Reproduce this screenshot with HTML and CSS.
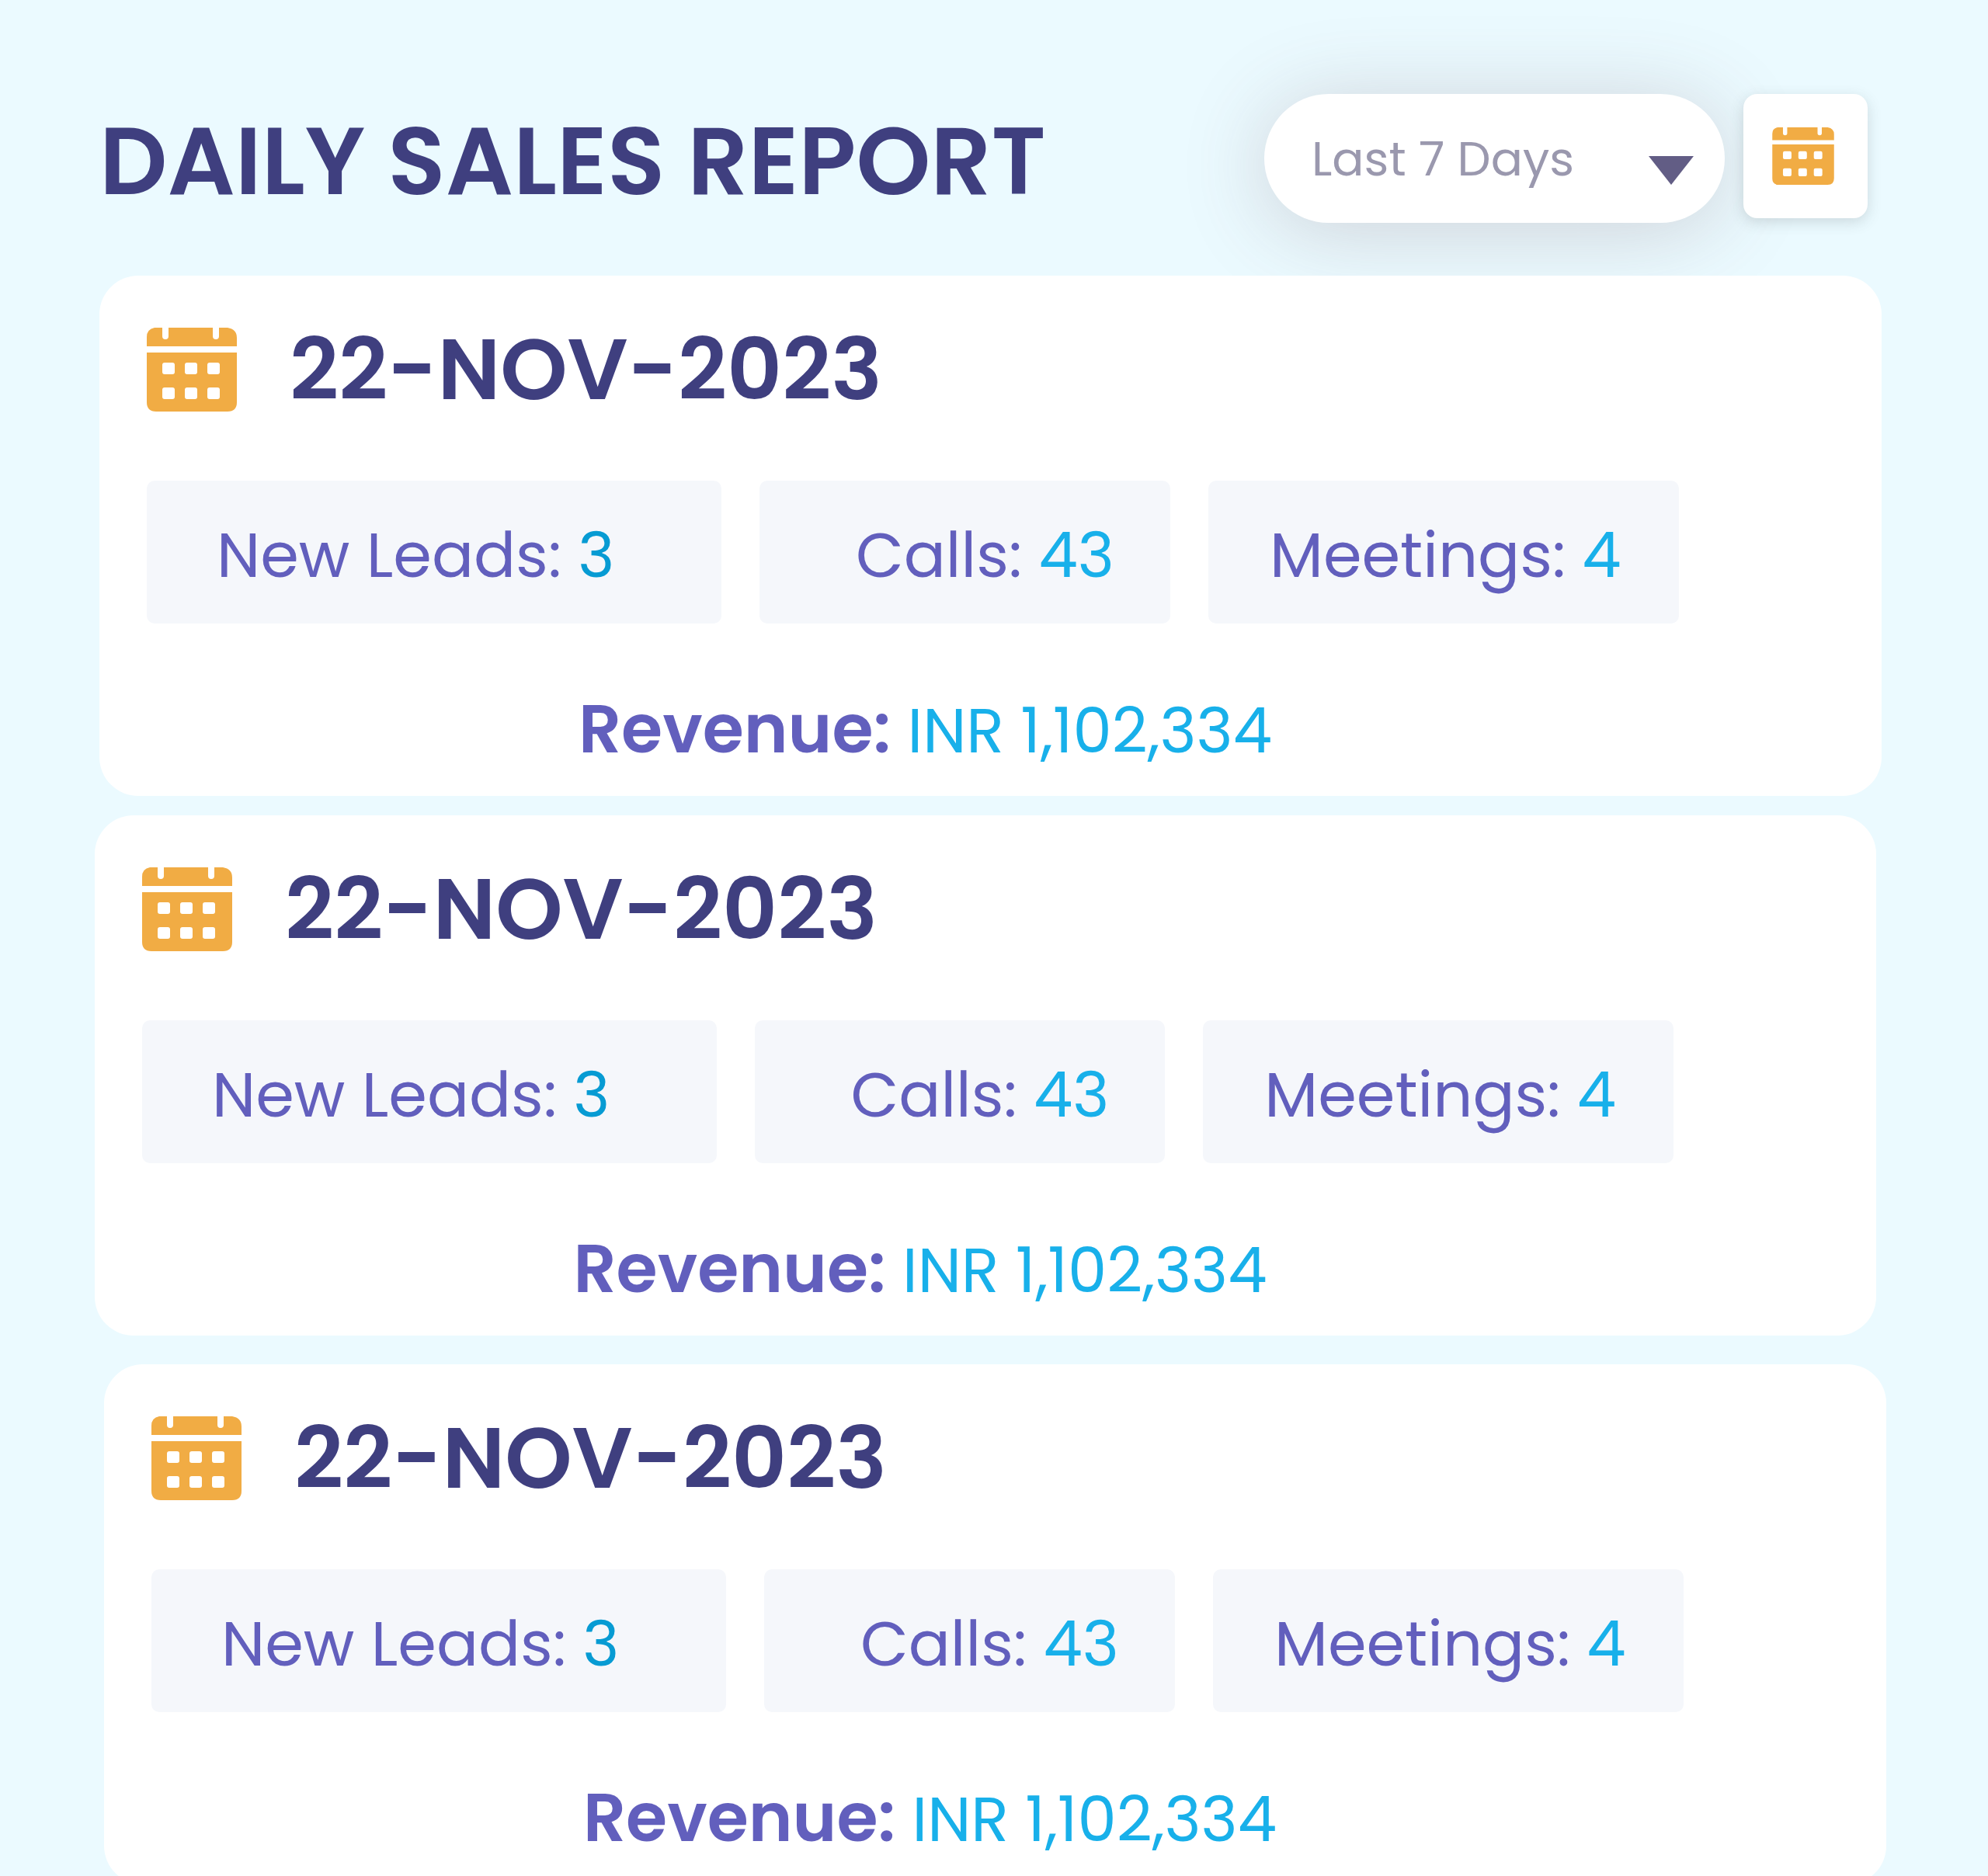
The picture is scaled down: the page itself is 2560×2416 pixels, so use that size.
FILE: index.html
```html
<!DOCTYPE html>
<html lang="en">
<head>
  <meta charset="UTF-8">
  <meta name="viewport" content="width=device-width, initial-scale=1">
  <title>Daily Sales Report</title>
  <link rel="stylesheet" href="styles.css">
</head>
<body>
  <!-- Calendar icon, reused by the button and the cards -->
  <svg class="sprite" aria-hidden="true">
    <symbol id="calendar" viewBox="0 0 116 108">
      <path fill="#f1ac44" d="M10 0H20V11a4 4 0 0 0 8 0V0H85V11a4 4 0 0 0 8 0V0H104Q116 2 116 13V24H0V12Q0 2 10 0Z"/>
      <path fill="#f1ac44" d="M0 32H116V96Q116 108 104 108H12Q0 108 0 96Z"/>
      <g fill="#ffffff">
        <rect x="20" y="45" width="16" height="15" rx="3"/>
        <rect x="49" y="45" width="16" height="15" rx="3"/>
        <rect x="78" y="45" width="16" height="15" rx="3"/>
        <rect x="20" y="77" width="16" height="15" rx="3"/>
        <rect x="49" y="77" width="16" height="15" rx="3"/>
        <rect x="78" y="77" width="16" height="15" rx="3"/>
      </g>
    </symbol>
  </svg>

  <main class="page">
    <header class="top-bar">
      <h1>DAILY SALES REPORT</h1>
      <div class="filters">
        <div class="range">
          <select id="range" aria-label="Date range">
            <option>Last 7 Days</option>
            <option>Last 30 Days</option>
          </select>
          <svg class="arrow" viewBox="0 0 58 37" aria-hidden="true"><path fill="#625d85" d="M0 0H58L29 37Z"/></svg>
        </div>
        <button class="calendar-btn" type="button" aria-label="Pick a date">
          <svg class="icon-small" aria-hidden="true"><use href="#calendar"/></svg>
        </button>
      </div>
    </header>

    <section class="card">
      <div class="card-header">
        <svg class="icon" aria-hidden="true"><use href="#calendar"/></svg>
        <h2>22-NOV-2023</h2>
      </div>
      <div class="stats">
        <p class="stat leads">New Leads: <span class="leads-value">3</span></p>
        <p class="stat calls">Calls: <span class="value">43</span></p>
        <p class="stat meetings">Meetings: <span class="value">4</span></p>
      </div>
      <p class="revenue"><strong>Revenue:</strong> <span class="value">INR 1,102,334</span></p>
    </section>

    <section class="card">
      <div class="card-header">
        <svg class="icon" aria-hidden="true"><use href="#calendar"/></svg>
        <h2>22-NOV-2023</h2>
      </div>
      <div class="stats">
        <p class="stat leads">New Leads: <span class="leads-value">3</span></p>
        <p class="stat calls">Calls: <span class="value">43</span></p>
        <p class="stat meetings">Meetings: <span class="value">4</span></p>
      </div>
      <p class="revenue"><strong>Revenue:</strong> <span class="value">INR 1,102,334</span></p>
    </section>

    <section class="card">
      <div class="card-header">
        <svg class="icon" aria-hidden="true"><use href="#calendar"/></svg>
        <h2>22-NOV-2023</h2>
      </div>
      <div class="stats">
        <p class="stat leads">New Leads: <span class="leads-value">3</span></p>
        <p class="stat calls">Calls: <span class="value">43</span></p>
        <p class="stat meetings">Meetings: <span class="value">4</span></p>
      </div>
      <p class="revenue"><strong>Revenue:</strong> <span class="value">INR 1,102,334</span></p>
    </section>
  </main>
</body>
</html>
```

FILE: styles.css
```css
* {
  box-sizing: border-box;
}
body {
  margin: 0;
  background-color: #ebfaff;
  font-family: Poppins, Inter, sans-serif;
  color: #625fbd;
}
h1, h2, p {
  margin: 0;
}
.sprite {
  display: none;
}
.page {
  height: 100vh;
  overflow: hidden;
}

/* Header */
.top-bar {
  display: flex;
  justify-content: space-between;
  align-items: flex-start;
  padding: 121px 155px 60px 128px;
}
h1 {
  font-size: 122px;
  font-weight: 600;
  line-height: 174px;
  color: #3f3f7f;
}
.filters {
  display: flex;
  align-items: flex-start;
  gap: 24px;
}
.range {
  display: grid;
  align-items: center;
}
.range select {
  grid-area: 1 / 1;
  width: 593px;
  height: 166px;
  padding: 0 130px 0 61px;
  border: none;
  border-radius: 83px;
  appearance: none;
  background-color: #ffffff;
  box-shadow: 0 10px 110px rgba(100, 68, 78, 0.22);
  font-family: inherit;
  font-size: 61px;
  font-weight: 400;
  color: #9a98ae;
}
.arrow {
  grid-area: 1 / 1;
  justify-self: end;
  width: 58px;
  height: 37px;
  margin: 30px 40px 0 0;
  pointer-events: none;
}
.calendar-btn {
  display: flex;
  justify-content: center;
  align-items: center;
  width: 160px;
  height: 160px;
  padding: 0 6px 0 0;
  border: none;
  border-radius: 18px;
  background-color: #ffffff;
  box-shadow: 0 5px 18px rgba(60, 70, 70, 0.18);
  cursor: pointer;
}
.icon-small {
  width: 80px;
  height: 74px;
}

/* Report cards */
.card {
  position: relative;
  margin: 0 137px 25px 128px;
  padding: 51px 261px 29px 61px;
  border-radius: 50px;
  background-color: #ffffff;
}
.card:nth-of-type(2) {
  margin: 0 144px 37px 122px;
}
.card:nth-of-type(3) {
  margin: 0 131px 0 134px;
}
.card-header {
  display: flex;
  align-items: center;
  gap: 68px;
}
.icon {
  width: 116px;
  height: 108px;
}
h2 {
  font-size: 110px;
  font-weight: 600;
  line-height: 140px;
  color: #3f3f7f;
}
.stats {
  display: grid;
  grid-template-columns: 740fr 529fr 606fr;
  gap: 49px;
  margin-top: 73px;
}
.stat {
  padding-top: 8px;
  border-radius: 10px;
  background-color: #f5f7fb;
  font-size: 80px;
  line-height: 176px;
  white-space: nowrap;
}
.leads {
  padding-left: 90px;
}
.calls {
  padding-left: 124px;
}
.meetings {
  padding-left: 79px;
}
.leads-value {
  color: #079bd3;
}
.value {
  color: #18b0ea;
}
.revenue {
  margin-top: 81px;
  padding-left: 32px;
  font-size: 80px;
  line-height: 110px;
  text-align: center;
  white-space: nowrap;
}
.revenue strong {
  font-size: 86px;
  font-weight: 600;
}
```
